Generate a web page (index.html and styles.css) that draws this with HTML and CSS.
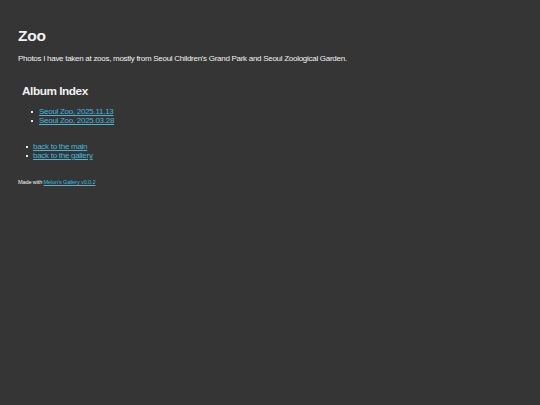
FILE: index.html
```html
<!DOCTYPE html>
<html>
<head>
<meta charset="utf-8">
<link rel="stylesheet" href="styles.css">
</head>
<body>
<main class="page">
  <h1 class="title">Zoo</h1>
  <p class="desc">Photos I have taken at zoos, mostly from Seoul Children's Grand Park and Seoul Zoological Garden.</p>
  <section class="index">
    <h2 class="index-title">Album Index</h2>
    <ul class="list albums">
      <li><a href="#">Seoul Zoo, 2025.11.13</a></li>
      <li><a href="#">Seoul Zoo, 2025.03.28</a></li>
    </ul>
  </section>
  <ul class="list nav">
    <li><a href="#">back to the main</a></li>
    <li><a href="#">back to the gallery</a></li>
  </ul>
  <footer class="foot">Made with <a href="#">Melon's Gallery v0.0.2</a></footer>
</main>
</body>
</html>
```
FILE: styles.css
```css
html, body {
  margin: 0;
  padding: 0;
  background: #353535;
  color: #f2f2f2;
  font-family: "Liberation Sans", Arial, sans-serif;
}
.page {
  padding: 27px 18px;
}
a {
  color: #47b6d8;
}
.title {
  margin: 0;
  font-size: 15.5px;
  font-weight: bold;
  line-height: 17px;
  letter-spacing: -0.2px;
}
.desc {
  margin: 10px 0 0;
  font-size: 8px;
  line-height: 9px;
  letter-spacing: -0.28px;
}
.index {
  margin: 22px 0 0 4px;
}
.index-title {
  margin: 0;
  font-size: 11.8px;
  line-height: 13px;
  letter-spacing: -0.45px;
}
.list {
  list-style: none;
  font-size: 8px;
  line-height: 9px;
  letter-spacing: -0.28px;
}
.list li {
  display: flex;
  align-items: center;
  gap: 5px;
}
.list li::before {
  content: "";
  width: 2px;
  height: 2px;
  background: #e8e8e8;
  flex: none;
}
.albums {
  margin: 9px 0 0;
  padding-left: 9px;
}
.albums li {
  gap: 6px;
}
.nav {
  margin: 17px 0 0;
  padding-left: 8px;
}
.foot {
  margin-top: 19px;
  font-size: 5.6px;
  line-height: 6px;
  letter-spacing: -0.15px;
}
```
